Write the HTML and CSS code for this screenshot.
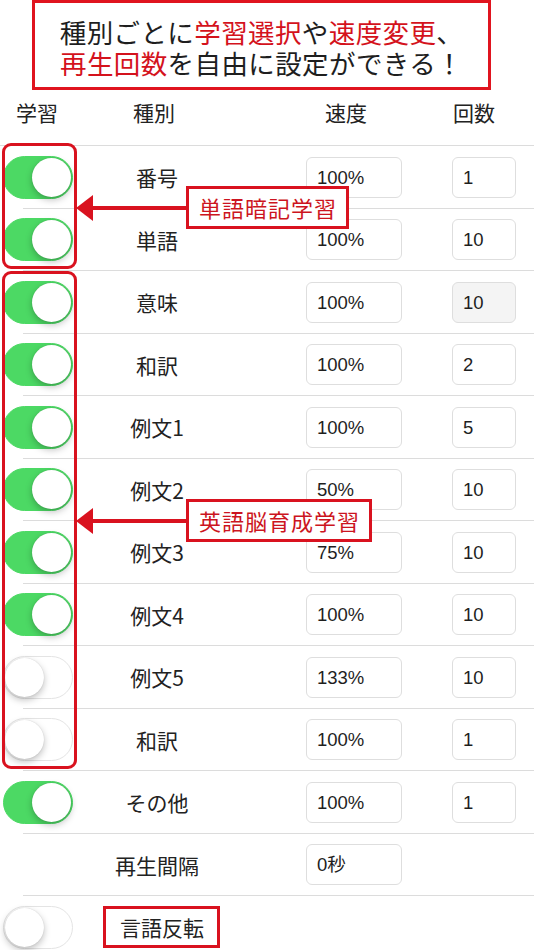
FILE: index.html
```html
<!DOCTYPE html>
<html lang="ja">
<head>
<meta charset="utf-8">
<title>設定</title>
<link rel="stylesheet" href="styles.css">
</head>
<body>
<div class="page">
  <div class="banner">
    <div class="bline"><span>種別ごとに</span><span class="hl">学習選択</span><span>や</span><span class="hl">速度変更</span><span>、</span></div>
    <div class="bline"><span class="hl">再生回数</span><span>を自由に設定ができる！</span></div>
  </div>

  <div class="grid head">
    <div class="h-learn">学習</div>
    <div class="h-kind">種別</div>
    <div class="h-speed">速度</div>
    <div class="h-count">回数</div>
  </div>

  <div class="list">
    <div class="grid row"><div class="sw on"><span class="knob"></span></div><div class="kind">番号</div><div class="field speed">100%</div><div class="field count">1</div></div>
    <div class="grid row"><div class="sw on"><span class="knob"></span></div><div class="kind">単語</div><div class="field speed">100%</div><div class="field count">10</div></div>
    <div class="grid row"><div class="sw on"><span class="knob"></span></div><div class="kind">意味</div><div class="field speed">100%</div><div class="field count disabled">10</div></div>
    <div class="grid row"><div class="sw on"><span class="knob"></span></div><div class="kind">和訳</div><div class="field speed">100%</div><div class="field count">2</div></div>
    <div class="grid row"><div class="sw on"><span class="knob"></span></div><div class="kind">例文1</div><div class="field speed">100%</div><div class="field count">5</div></div>
    <div class="grid row"><div class="sw on"><span class="knob"></span></div><div class="kind">例文2</div><div class="field speed">50%</div><div class="field count">10</div></div>
    <div class="grid row"><div class="sw on"><span class="knob"></span></div><div class="kind">例文3</div><div class="field speed">75%</div><div class="field count">10</div></div>
    <div class="grid row"><div class="sw on"><span class="knob"></span></div><div class="kind">例文4</div><div class="field speed">100%</div><div class="field count">10</div></div>
    <div class="grid row"><div class="sw"><span class="knob"></span></div><div class="kind">例文5</div><div class="field speed">133%</div><div class="field count">10</div></div>
    <div class="grid row"><div class="sw"><span class="knob"></span></div><div class="kind">和訳</div><div class="field speed">100%</div><div class="field count">1</div></div>
    <div class="grid row"><div class="sw on"><span class="knob"></span></div><div class="kind">その他</div><div class="field speed">100%</div><div class="field count">1</div></div>
    <div class="grid row"><div class="kind">再生間隔</div><div class="field speed">0秒</div></div>
    <div class="grid row last"><div class="sw"><span class="knob"></span></div><div class="kind left"><span class="boxed">言語反転</span></div></div>
  </div>

  <div class="group group-1"></div>
  <div class="group group-2"></div>

  <div class="callout callout-1">
    <svg class="head-arrow" width="17" height="26" viewBox="0 0 17 26"><polygon points="0,13 17,0 17,26" fill="#d9121f"/></svg>
    <div class="shaft"></div>
    <div class="label">単語暗記学習</div>
  </div>
  <div class="callout callout-2">
    <svg class="head-arrow" width="17" height="26" viewBox="0 0 17 26"><polygon points="0,13 17,0 17,26" fill="#d9121f"/></svg>
    <div class="shaft"></div>
    <div class="label">英語脳育成学習</div>
  </div>
</div>
</body>
</html>
```
FILE: styles.css
```css
* { box-sizing: border-box; }
html, body { margin: 0; padding: 0; background: #fff; }
body {
  font-family: "Noto Sans CJK JP", "Liberation Sans", sans-serif;
  color: #1f1f1f;
}
.page {
  position: relative;
  width: 534px;
  height: 950px;
  overflow: hidden;
}

/* banner */
.banner {
  margin-left: 32px;
  width: 459px;
  height: 90px;
  border: 3px solid #e0141f;
  padding-top: 13px;
  font-size: 26.5px;
  letter-spacing: 0.4px;
  color: #1e1e1e;
  display: flex;
  flex-direction: column;
  align-items: center;
}
.bline {
  display: flex;
  height: 31px;
  align-items: center;
}
.bline span {
  display: block;
  line-height: 31px;
  height: 31px;
  white-space: nowrap;
}
.banner .hl { color: #d4121c; }

/* grid layout */
.grid {
  display: grid;
  grid-template-columns: 96px 122px 88px 96px 50px 64px 18px;
  align-items: center;
}

.head {
  height: 56px;
  border-bottom: 1px solid #dcdcdc;
  align-items: start;
  padding-top: 9px;
  font-size: 21px;
  line-height: 26px;
  color: #222;
}
.h-learn { grid-column: 1; padding-left: 16px; }
.h-kind { grid-column: 2; padding-left: 37px; }
.h-speed { grid-column: 4; padding-left: 19px; }
.h-count { grid-column: 6; padding-left: 1px; }

.row {
  height: 62.5px;
  background: linear-gradient(#dcdcdc, #dcdcdc) no-repeat 23px 100% / calc(100% - 23px) 1px;
}
.row.last { background: none; }

.kind {
  grid-column: 2;
  text-align: center;
  font-size: 21px;
  line-height: 28px;
  color: #222;
  white-space: nowrap;
}
.kind.left {
  text-align: left;
  padding-left: 7px;
}

.field {
  height: 41px;
  border: 1px solid #dedede;
  border-radius: 6px;
  background: #fff;
  font-family: "Liberation Sans", "Noto Sans CJK JP", sans-serif;
  font-size: 18.5px;
  line-height: 39px;
  padding-left: 10px;
  color: #1e1e1e;
}
.field.speed { grid-column: 4; }
.field.count { grid-column: 6; }
.field.disabled { background: #f4f4f4; }

/* switch */
.sw {
  grid-column: 1;
  margin-left: 3px;
  width: 70px;
  height: 43px;
  border-radius: 22px;
  border: 1.5px solid #e4e4e4;
  background: #fff;
  display: flex;
  align-items: center;
  padding: 0 1px;
}
.sw .knob {
  width: 39px;
  height: 39px;
  border-radius: 50%;
  background: #fff;
  box-shadow: 0 3px 7px rgba(0, 0, 0, 0.25), 0 0 1px rgba(0, 0, 0, 0.2);
}
.sw.on {
  background: #4cd964;
  border-color: #4cd964;
  justify-content: flex-end;
}

/* boxed label */
.boxed {
  display: inline-block;
  border: 3px solid #d9121f;
  padding: 4px 13px 4px 14px;
  line-height: 28px;
}

/* annotation overlays */
.group {
  position: absolute;
  left: 2px;
  width: 75px;
  border: 3px solid #d9121f;
  border-radius: 9px;
}
.group-1 { top: 143px; height: 126px; }
.group-2 { top: 271px; height: 498px; }

.callout {
  position: absolute;
  left: 76px;
  display: flex;
  align-items: center;
}
.callout-1 { top: 186px; }
.callout-2 { top: 499px; }
.head-arrow { display: block; flex: none; }
.shaft {
  width: 93px;
  height: 4px;
  background: #d9121f;
}
.label {
  height: 43px;
  border: 3px solid #d9121f;
  background: #fff;
  padding: 0 9px 0 10px;
  font-size: 22px;
  line-height: 37px;
  letter-spacing: 1px;
  color: #cc1420;
  white-space: nowrap;
}
```
